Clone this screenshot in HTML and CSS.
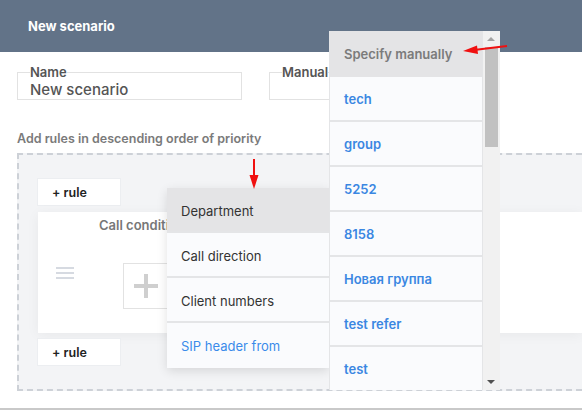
FILE: index.html
```html
<!DOCTYPE html>
<html lang="en">
<head>
  <meta charset="UTF-8" />
  <meta name="viewport" content="width=device-width, initial-scale=1.0" />
  <title>New scenario</title>
  <link rel="stylesheet" href="styles.css">
</head>
<body>
  <header class="top">
    <h1>New scenario</h1>
  </header>

  <main class="content">
    <div class="fields">
      <fieldset class="field">
        <legend>Name</legend>
        <div class="field-value">New scenario</div>
      </fieldset>
      <fieldset class="field">
        <legend>Manual</legend>
        <div class="field-value"></div>
      </fieldset>
    </div>

    <p class="hint">Add rules in descending order of priority</p>

    <div class="rules">
      <button type="button" class="add-rule">+ rule</button>
      <div class="rule-card">
        <div class="handle">
          <span></span><span></span><span></span>
        </div>
        <div class="rule-body">
          <div class="rule-title">Call conditions</div>
          <div class="add-condition"><span class="plus"></span></div>
        </div>
      </div>
      <button type="button" class="add-rule">+ rule</button>
    </div>
  </main>
  <div class="bottom-line"></div>

  <!-- condition type menu -->
  <ul class="menu menu-fields">
    <li class="active">Department</li>
    <li>Call direction</li>
    <li>Client numbers</li>
    <li class="link">SIP header from</li>
  </ul>

  <!-- department list -->
  <div class="menu-groups">
    <ul class="menu">
      <li class="active">Specify manually</li>
      <li>tech</li>
      <li>group</li>
      <li>5252</li>
      <li>8158</li>
      <li>Новая группа</li>
      <li>test refer</li>
      <li>test</li>
    </ul>
    <div class="scrollbar">
      <span class="arrow up"></span>
      <span class="thumb"></span>
      <span class="arrow down"></span>
    </div>
  </div>

  <svg class="pointer pointer-down" width="12" height="32" viewBox="0 0 12 32">
    <line x1="6" y1="1" x2="6" y2="20" stroke="#f01010" stroke-width="2" />
    <polygon points="1.5,17 10.5,17 6,31" fill="#f01010" />
  </svg>
  <svg class="pointer pointer-left" width="46" height="12" viewBox="0 0 46 12">
    <line x1="45" y1="3" x2="12" y2="7" stroke="#f01010" stroke-width="2.2" />
    <polygon points="1,8 15,2.5 16,11" fill="#f01010" />
  </svg>
</body>
</html>
```

FILE: styles.css
```css
body {
  margin: 0;
  width: 582px;
  height: 410px;
  overflow: hidden;
  position: relative;
  background: #fff;
  font-family: Inter, "Noto Sans", sans-serif;
  color: #555;
}
.top {
  height: 52px;
  background: #627388;
  display: flex;
  align-items: center;
  padding-left: 28px;
}
.top h1 {
  margin: 0;
  font-size: 13px;
  font-weight: 700;
  color: #fff;
}
.content {
  padding-left: 17px;
}
.fields {
  display: flex;
  gap: 27px;
  margin-top: 13px;
}
.field {
  width: 225px;
  height: 35px;
  box-sizing: border-box;
  margin: 0;
  padding: 0 12px;
  border: 1px solid #e2e2e2;
}
.field legend {
  padding: 0;
  font-size: 13px;
  font-weight: 600;
  color: #555;
  line-height: 14px;
}
.field-value {
  font-size: 15px;
  font-weight: 500;
  color: #555;
  line-height: 18px;
  margin-top: 2px;
}
.hint {
  margin: 31px 0 6px;
  font-size: 12.5px;
  font-weight: 600;
  color: #7a7a7a;
  line-height: 16px;
}
.rules {
  width: 565px;
  height: 238px;
  box-sizing: border-box;
  background: #f3f4f6;
  border: 2px dashed #cdd1d7;
  border-right: none;
  padding: 23px 0 0 18px;
}
.add-rule {
  display: block;
  width: 84px;
  height: 28px;
  padding: 0 0 0 14px;
  text-align: left;
  background: #fff;
  border: 1px solid #eceef1;
  font-family: inherit;
  font-size: 12.5px;
  font-weight: 600;
  color: #222;
}
.rule-card {
  display: flex;
  height: 121px;
  margin: 6px 0 5px 1px;
  background: #fff;
  box-shadow: 0 2px 12px rgba(0, 0, 0, 0.05);
}
.handle {
  width: 61px;
  display: flex;
  flex-direction: column;
  justify-content: center;
  gap: 3px;
  padding-left: 18px;
  box-sizing: border-box;
}
.handle span {
  display: block;
  width: 18px;
  height: 2px;
  background: #d6dae1;
}
.rule-title {
  margin-top: 6px;
  font-size: 13px;
  font-weight: 600;
  color: #777;
  line-height: 14px;
}
.add-condition {
  width: 60px;
  height: 44px;
  margin: 31px 0 0 24px;
  border: 1px solid #e2e2e2;
  position: relative;
}
.plus::before,
.plus::after {
  content: "";
  position: absolute;
  background: #cfcfcf;
}
.plus::before {
  left: 10px;
  top: 20px;
  width: 24px;
  height: 4px;
}
.plus::after {
  left: 20px;
  top: 10px;
  width: 4px;
  height: 24px;
}
.bottom-line {
  margin-top: 17px;
  height: 2px;
  background: #c9c9c9;
}
.menu {
  list-style: none;
  margin: 0;
  padding: 0;
  font-size: 13px;
}
.menu li {
  height: 43px;
  line-height: 43px;
  padding-left: 14px;
  background: #fafbfd;
  border-bottom: 2px solid #e4e5e7;
  white-space: nowrap;
}
.menu-fields {
  position: absolute;
  left: 167px;
  top: 188px;
  width: 162px;
  background: #fff;
  box-shadow: 0 3px 10px rgba(0, 0, 0, 0.12);
  color: #333;
}
.menu-fields li {
  line-height: 46px;
}
.menu-fields li:last-child {
  border-bottom: none;
  height: 45px;
}
.menu li.active {
  background: #e4e4e6;
}
.menu-fields li.link {
  color: #3a8bea;
}
.menu-groups {
  position: absolute;
  left: 329px;
  top: 31px;
  width: 171px;
  height: 359px;
  display: flex;
  overflow: hidden;
  background: #e4e5e7;
}
.menu-groups .menu {
  width: 152px;
  margin-left: 1px;
  font-weight: 600;
  color: #3a87e2;
}
.menu-groups li {
  line-height: 45px;
}
.menu-groups li.active {
  color: #7b7b7b;
  border-bottom-width: 0;
  height: 46px;
  line-height: 46px;
}
.scrollbar {
  width: 17px;
  margin-left: 1px;
  background: #f1f1f1;
  position: relative;
}
.thumb {
  position: absolute;
  left: 2px;
  top: 16px;
  width: 13px;
  height: 100px;
  background: #c1c1c1;
}
.arrow {
  position: absolute;
  left: 4px;
  width: 0;
  height: 0;
  border-left: 4px solid transparent;
  border-right: 4px solid transparent;
}
.arrow.up {
  top: 6px;
  border-bottom: 4px solid #a3a3a3;
}
.arrow.down {
  bottom: 6px;
  border-top: 4px solid #505050;
}
.pointer {
  position: absolute;
}
.pointer-down {
  left: 248px;
  top: 158px;
}
.pointer-left {
  left: 462px;
  top: 43px;
}
```
